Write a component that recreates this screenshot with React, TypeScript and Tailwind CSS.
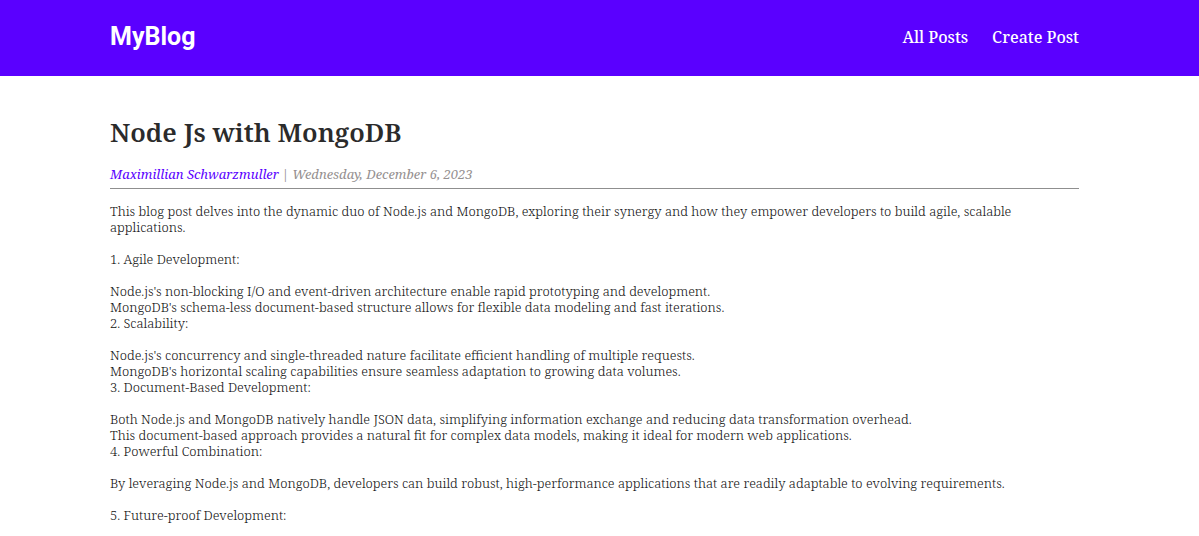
const intro =
  "This blog post delves into the dynamic duo of Node.js and MongoDB, exploring their synergy and how they empower developers to build agile, scalable applications.";

const body = `1. Agile Development:

Node.js's non-blocking I/O and event-driven architecture enable rapid prototyping and development.
MongoDB's schema-less document-based structure allows for flexible data modeling and fast iterations.
2. Scalability:

Node.js's concurrency and single-threaded nature facilitate efficient handling of multiple requests.
MongoDB's horizontal scaling capabilities ensure seamless adaptation to growing data volumes.
3. Document-Based Development:

Both Node.js and MongoDB natively handle JSON data, simplifying information exchange and reducing data transformation overhead.
This document-based approach provides a natural fit for complex data models, making it ideal for modern web applications.
4. Powerful Combination:

By leveraging Node.js and MongoDB, developers can build robust, high-performance applications that are readily adaptable to evolving requirements.

5. Future-proof Development:`;

function Header() {
  return (
    <header className="bg-[#5a00ff] pr-[120px] pl-[110px] text-white">
      <div className="flex items-center justify-between pt-[17px] pb-[19px]">
        <a href="#home" className="font-['Roboto',sans-serif] text-[25px] leading-10 font-bold">
          MyBlog
        </a>
        <nav className="flex gap-6 text-base leading-6 font-medium">
          <a href="#posts">All Posts</a>
          <a href="#create">Create Post</a>
        </nav>
      </div>
    </header>
  );
}

export default function App() {
  return (
    <div className="bg-white font-['Roboto_Slab','Noto_Serif','DejaVu_Serif',serif] text-[#2b2b2b]">
      <Header />
      <main className="pt-10 pr-[120px] pl-[110px]">
        <h1 className="text-[26px] leading-8 font-semibold">Node Js with MongoDB</h1>
        <div className="mt-4 flex gap-[3px] border-b border-[#8f8f8f] pb-1 text-[13px] leading-5 text-[#959090] italic">
          <a href="#author" className="text-[#5a00ff]">Maximillian Schwarzmuller</a>
          <span className="not-italic">|</span>
          <time dateTime="2023-12-06">Wednesday, December 6, 2023</time>
        </div>
        <article className="mt-[14px] text-[13px] leading-4 font-light whitespace-pre-line text-[#111111]">
          <p>{intro}</p>
          <p className="mt-4">{body}</p>
        </article>
      </main>
    </div>
  );
}
